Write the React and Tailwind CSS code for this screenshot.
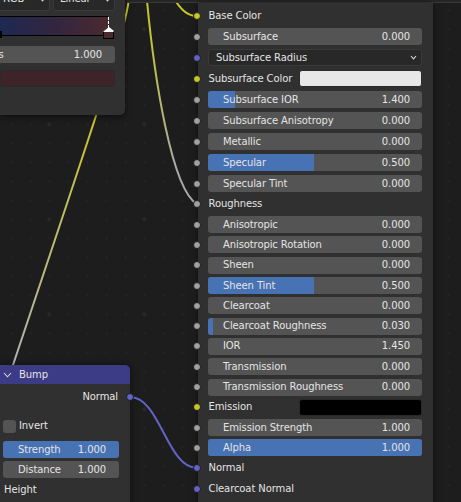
const SOCKET = {
  yellow: 'bg-[#c7c729]',
  gray: 'bg-[#a1a1a1]',
  blue: 'bg-[#6363c7]',
};

const rows = [
  { label: 'Base Color', socket: 'yellow', type: 'label', h: 'h-[20px]' },
  { label: 'Subsurface', value: '0.000', socket: 'gray', type: 'slider', h: 'h-[21px]' },
  { label: 'Subsurface Radius', socket: 'blue', type: 'menu', h: 'h-[21px]' },
  { label: 'Subsurface Color', socket: 'yellow', type: 'color', swatch: 'bg-[#e8e8e8]', h: 'h-[21px]' },
  { label: 'Subsurface IOR', value: '1.400', socket: 'gray', type: 'slider', fill: '27px', h: 'h-[21px]' },
  { label: 'Subsurface Anisotropy', value: '0.000', socket: 'gray', type: 'slider', h: 'h-[21px]' },
  { label: 'Metallic', value: '0.000', socket: 'gray', type: 'slider', h: 'h-[21px]' },
  { label: 'Specular', value: '0.500', socket: 'gray', type: 'slider', fill: '106px', h: 'h-[21px]' },
  { label: 'Specular Tint', value: '0.000', socket: 'gray', type: 'slider', h: 'h-[21px]' },
  { label: 'Roughness', socket: 'gray', type: 'label', h: 'h-[20.5px]' },
  { label: 'Anisotropic', value: '0.000', socket: 'gray', type: 'slider', h: 'h-[20.3px]' },
  { label: 'Anisotropic Rotation', value: '0.000', socket: 'gray', type: 'slider', h: 'h-[20.3px]' },
  { label: 'Sheen', value: '0.000', socket: 'gray', type: 'slider', h: 'h-[20.3px]' },
  { label: 'Sheen Tint', value: '0.500', socket: 'gray', type: 'slider', fill: '106px', h: 'h-[20.3px]' },
  { label: 'Clearcoat', value: '0.000', socket: 'gray', type: 'slider', h: 'h-[20.3px]' },
  { label: 'Clearcoat Roughness', value: '0.030', socket: 'gray', type: 'slider', fill: '5px', h: 'h-[20.3px]' },
  { label: 'IOR', value: '1.450', socket: 'gray', type: 'slider', h: 'h-[20.3px]' },
  { label: 'Transmission', value: '0.000', socket: 'gray', type: 'slider', h: 'h-[20.3px]' },
  { label: 'Transmission Roughness', value: '0.000', socket: 'gray', type: 'slider', h: 'h-[20.3px]' },
  { label: 'Emission', socket: 'yellow', type: 'color', swatch: 'bg-black', h: 'h-[20.3px]' },
  { label: 'Emission Strength', value: '1.000', socket: 'gray', type: 'slider', h: 'h-[20.3px]' },
  { label: 'Alpha', value: '1.000', socket: 'gray', type: 'slider', fill: '100%', h: 'h-[20.3px]' },
  { label: 'Normal', socket: 'blue', type: 'label', h: 'h-[20.3px]' },
  { label: 'Clearcoat Normal', socket: 'blue', type: 'label', h: 'h-[20.3px]' },
];

function Socket({ color, className = '' }) {
  return (
    <span
      className={`absolute top-1/2 -translate-y-1/2 w-[8px] h-[8px] rounded-full border border-[#1b1b1b] ${SOCKET[color]} ${className}`}
    />
  );
}

function Chevron({ className = '', w = 7, h = 5 }) {
  return (
    <svg width={w} height={h} viewBox={`0 0 ${w} ${h}`} className={className}>
      <path d={`M1 1 L${w / 2} ${h - 1.2} L${w - 1} 1`} fill="none" stroke="#d8d8d8" strokeWidth="1.1" />
    </svg>
  );
}

function Slider({ label, value, fill, className = '', pl = 'pl-[15px]', pr = 'pr-[12px]' }) {
  return (
    <div className={`relative flex-1 h-[17px] rounded-[3px] bg-[#545454] overflow-hidden ${className}`}>
      {fill && <div className="absolute left-0 top-0 bottom-0 bg-[#4772b3]" style={{ width: fill }} />}
      <div className={`relative flex h-full items-center justify-between ${pl} ${pr}`}>
        <span>{label}</span>
        <span>{value}</span>
      </div>
    </div>
  );
}

function Row({ row }) {
  return (
    <div className={`relative flex items-center pl-[10px] pr-[11px] ${row.h}`}>
      <Socket color={row.socket} className="left-[-5px]" />
      {row.type === 'label' && <span className="pl-[0.5px]">{row.label}</span>}
      {row.type === 'slider' && <Slider label={row.label} value={row.value} fill={row.fill} />}
      {row.type === 'menu' && (
        <div className="flex flex-1 h-[17px] items-center justify-between rounded-[3px] bg-[#282828] border border-[#3a3a3a] pl-[7px] pr-[4px]">
          <span>{row.label}</span>
          <Chevron />
        </div>
      )}
      {row.type === 'color' && (
        <>
          <span className="w-[91px] pl-[0.5px]">{row.label}</span>
          <div className={`flex-1 h-[17px] rounded-[3px] border border-[#2a2a2a] ${row.swatch}`} />
        </>
      )}
    </div>
  );
}

function Wires() {
  return (
    <svg className="absolute inset-0" width="461" height="502" viewBox="0 0 461 502">
      <defs>
        <linearGradient id="wireRough" gradientUnits="userSpaceOnUse" x1="0" y1="30" x2="0" y2="170">
          <stop offset="0" stopColor="#c4c42e" />
          <stop offset="1" stopColor="#a9a9a9" />
        </linearGradient>
        <linearGradient id="wireHeight" gradientUnits="userSpaceOnUse" x1="0" y1="110" x2="0" y2="360">
          <stop offset="0" stopColor="#c6c62a" />
          <stop offset="1" stopColor="#b2b2b2" />
        </linearGradient>
      </defs>
      <g fill="none" strokeWidth="2" strokeLinecap="round">
        <path d="M172 -4 C180 8, 186 16, 197 16" stroke="#c7c729" />
        <path d="M146 -10 C154 80, 172 190, 197 204" stroke="url(#wireRough)" />
        <path d="M129 -2 C126 30, 100 105, 8 380" stroke="url(#wireHeight)" />
        <path d="M130 397 C160 397, 167 468, 197 468" stroke="#6363c7" />
      </g>
    </svg>
  );
}

function RampNode() {
  return (
    <div className="absolute left-0 top-0 w-[125px] h-[115px] bg-[#303030] rounded-br-[5px] shadow-[0_2px_6px_rgba(0,0,0,0.5)] pr-[10px]">
      <div className="flex gap-[3px] -mt-[13px] h-[24px]">
        <div className="flex w-[60px] -ml-[10px] items-center justify-between rounded-[3px] bg-[#282828] border border-[#3a3a3a] pl-[12px] pr-[3px]">
          <span>RGB</span>
          <Chevron />
        </div>
        <div className="flex flex-1 items-center justify-between rounded-[3px] bg-[#282828] border border-[#3a3a3a] pl-[6px] pr-[3px]">
          <span>Linear</span>
          <Chevron />
        </div>
      </div>
      <div className="relative mt-[5px] w-[108px] h-[20px] border-y border-black bg-[linear-gradient(to_right,#1d2952,#35253f_55%,#4a2a2e)]">
        <div className="absolute left-0 top-[14px] w-[2px] h-[7px] bg-black" />
        <div className="absolute right-[-1px] top-0 h-[11px] border-l border-dashed border-white" />
        <div className="absolute right-[-6px] top-[10px] flex flex-col items-center">
          <div className="w-0 h-0 border-x-[5px] border-x-transparent border-b-[4px] border-b-white" />
          <div className="w-[11px] h-[8px] bg-[#4a2a2e] border border-black border-t-white" />
        </div>
      </div>
      <div className="flex mt-[10px] h-[17px] -ml-[20px] items-center justify-between rounded-[3px] bg-[#545454] pl-[7px] pr-[13px]">
        <span>Pos</span>
        <span>1.000</span>
      </div>
      <div className="mt-[7px] h-[17px] rounded-[3px] bg-[#3e2429] border border-[#2a2a2a]" />
    </div>
  );
}

function BumpNode() {
  return (
    <div className="absolute left-0 top-[365px] w-[130px] h-[150px] bg-[#303030] rounded-tr-[5px] shadow-[0_0_6px_rgba(0,0,0,0.5)]">
      <div className="flex h-[19px] items-center gap-[7px] rounded-tr-[5px] bg-[#3c3b86] pl-[3px]">
        <Chevron w={9} h={6} />
        <span>Bump</span>
      </div>
      <div className="relative flex h-[26px] items-center justify-end pr-[12px]">
        <span>Normal</span>
        <Socket color="blue" className="right-[-4px]" />
      </div>
      <div className="flex mt-[6px] h-[20px] items-center gap-[3px] pl-[3px]">
        <div className="w-[13px] h-[13px] rounded-[3px] bg-[#545454]" />
        <span>Invert</span>
      </div>
      <div className="flex flex-col gap-[3px] mt-[5px] pl-[3px] pr-[11px]">
        <Slider label="Strength" value="1.000" fill="100%" pl="pl-[15px]" pr="pr-[13px]" className="flex-none" />
        <Slider label="Distance" value="1.000" pl="pl-[15px]" pr="pr-[13px]" className="flex-none" />
      </div>
      <div className="flex mt-[2px] h-[20px] items-center pl-[4px]">
        <span>Height</span>
      </div>
    </div>
  );
}

export default function App() {
  return (
    <div className="relative w-[461px] h-[502px] overflow-hidden bg-[#1d1d1d] bg-[radial-gradient(circle,#292929_1.7px,transparent_2.3px),radial-gradient(circle,#252525_0.9px,transparent_1.4px)] bg-[length:95px_95px,19px_19px] bg-[position:1.8px_-18.2px,2.2px_0.8px] font-['DejaVu_Sans',sans-serif] text-[10px] leading-none tracking-[-0.1px] text-[#e4e4e4]">
      <Wires />
      <div className="absolute left-[127px] right-0 top-0 h-[3px] bg-[#262626] border-b border-[#3a3a3a]" />
      <RampNode />
      <div className="absolute left-[198px] top-[3px] bottom-[-6px] w-[235px] bg-[#303030] shadow-[0_0_6px_rgba(0,0,0,0.5)] pt-[3px]">
        {rows.map((row) => (
          <Row key={row.label} row={row} />
        ))}
      </div>
      <BumpNode />
    </div>
  );
}
